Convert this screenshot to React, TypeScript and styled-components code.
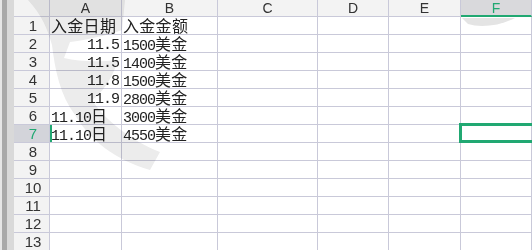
import React from "react";
import styled, { createGlobalStyle, css } from "styled-components";

const Global = createGlobalStyle`
  html, body { margin: 0; padding: 0; background: #ffffff; }
  body { width: 532px; height: 250px; overflow: hidden; }
`;

const GRID = "#c9c9d9";
const HEADER_BG = "#f3f3f3";
const GREEN = "#21a872";

const Page = styled.div`
  position: relative;
  display: flex;
  width: 532px;
  height: 250px;
  overflow: hidden;
  background: #fff;
`;

const LeftStrip = styled.div`
  width: 14px;
  flex: none;
  background: linear-gradient(
    to right,
    #e6e6e6 0px,
    #e6e6e6 2px,
    #a9a9a9 2px,
    #a9a9a9 7px,
    #d9d9d9 7px,
    #d9d9d9 14px
  );
`;

const Sheet = styled.div`
  flex: 1;
  display: grid;
  grid-template-columns: 36px 72px 96px 100px 71px 72px 1fr;
  grid-auto-rows: 18px;
  grid-template-rows: 17px;
  align-content: start;
`;

const ColHead = styled.div<{ $active?: boolean }>`
  background: ${HEADER_BG};
  border-right: 1px solid ${GRID};
  border-bottom: 1px solid ${GRID};
  box-sizing: border-box;
  display: flex;
  align-items: center;
  justify-content: center;
  font-family: "Liberation Sans", Arial, sans-serif;
  font-size: 14px;
  color: #333;
  ${(p) =>
    p.$active &&
    css`
      background: #d9d9dc;
      color: ${GREEN};
      border-bottom: 2px solid ${GREEN};
    `}
`;

const Corner = styled(ColHead)``;

const RowHead = styled.div<{ $active?: boolean }>`
  background: ${HEADER_BG};
  border-right: 1px solid ${GRID};
  border-bottom: 1px solid ${GRID};
  box-sizing: border-box;
  display: flex;
  align-items: center;
  justify-content: center;
  font-family: "Liberation Sans", Arial, sans-serif;
  font-size: 15px;
  color: #333;
  padding-left: 3px;
  ${(p) =>
    p.$active &&
    css`
      background: #d3d4da;
      color: ${GREEN};
    `}
`;

const Cell = styled.div<{ $align?: "left" | "right"; $marker?: boolean }>`
  position: relative;
  border-right: 1px solid ${GRID};
  border-bottom: 1px solid ${GRID};
  box-sizing: border-box;
  display: flex;
  align-items: center;
  justify-content: ${(p) => (p.$align === "right" ? "flex-end" : "flex-start")};
  padding: 3px 2px 0 1px;
  white-space: nowrap;
  overflow: visible;
  color: #222;
  ${(p) =>
    p.$marker &&
    css`
      box-shadow: inset 2px 0 0 ${GREEN};
    `}
`;

const Text = styled.span`
  display: block;
  font-family: "Liberation Mono", monospace;
  font-size: 15px;
  line-height: 15px;
  white-space: nowrap;
`;

const Ascii = styled.span`
  letter-spacing: -1px;
`;

const Han = styled.span`
  font-family: "Noto Sans CJK SC", sans-serif;
  font-size: 16px;
  letter-spacing: 0.3px;
`;

const Selection = styled.div`
  position: absolute;
  left: -2px;
  top: -2px;
  right: -6px;
  bottom: -1px;
  border: 3px solid ${GREEN};
  border-right: none;
  pointer-events: none;
  z-index: 2;
`;

const Watermark = styled.svg`
  position: absolute;
  left: 0;
  top: 0;
  width: 532px;
  height: 250px;
  pointer-events: none;
  mix-blend-mode: multiply;
`;

type Row = { a?: string; aRight?: boolean; b?: string };

const rows: Row[] = [
  { a: "入金日期", b: "入金金额" },
  { a: "11.5", aRight: true, b: "1500美金" },
  { a: "11.5", aRight: true, b: "1400美金" },
  { a: "11.8", aRight: true, b: "1500美金" },
  { a: "11.9", aRight: true, b: "2800美金" },
  { a: "11.10日", b: "3000美金" },
  { a: "11.10日", b: "4550美金" },
  {},
  {},
  {},
  {},
  {},
  {},
];

const cols = ["A", "B", "C", "D", "E", "F"];

function renderText(t?: string) {
  if (!t) return null;
  const parts = t.split(/([^\x00-\x7f]+)/).filter(Boolean);
  return (
    <Text>
      {parts.map((p, i) =>
        /[^\x00-\x7f]/.test(p) ? <Han key={i}>{p}</Han> : <Ascii key={i}>{p}</Ascii>
      )}
    </Text>
  );
}

export default function App() {
  return (
    <>
      <Global />
      <Page>
        <LeftStrip />
        <Sheet>
          <Corner />
          {cols.map((c) => (
            <ColHead key={c} $active={c === "F"}>
              {c}
            </ColHead>
          ))}
          {rows.map((r, i) => {
            const n = i + 1;
            return (
              <React.Fragment key={n}>
                <RowHead $active={n === 7}>{n}</RowHead>
                <Cell $align={r.aRight ? "right" : "left"} $marker={n === 7}>
                  {renderText(r.a)}
                </Cell>
                <Cell>{renderText(r.b)}</Cell>
                <Cell />
                <Cell />
                <Cell />
                <Cell>{n === 7 && <Selection />}</Cell>
              </React.Fragment>
            );
          })}
        </Sheet>
        <Watermark viewBox="0 0 532 250">
          <path
            d="M 28 0 L 125 0 L 122 30 C 105 36 85 40 70 42 L 64 58 C 80 62 100 62 118 60 C 112 80 100 95 92 100 C 105 120 130 140 160 152 L 150 170 C 115 160 90 140 75 115 C 60 95 55 70 52 45 C 48 30 42 15 28 0 Z"
            fill="#ececec"
          />
          <path d="M 462 18 L 515 18 C 500 26 480 28 468 24 Z" fill="#e4e4e4" />
        </Watermark>
      </Page>
    </>
  );
}
